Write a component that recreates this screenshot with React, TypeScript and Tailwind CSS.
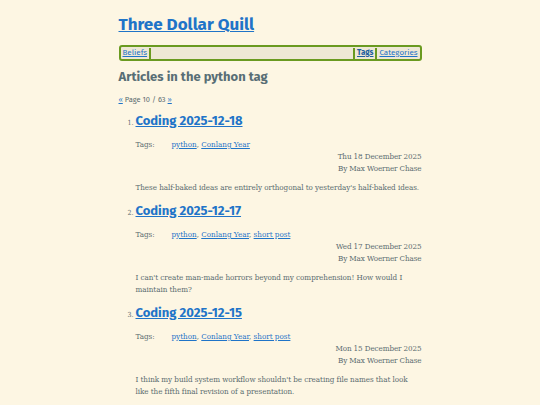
import React from 'react';

type Post = {
  title: string;
  tags: string[];
  date: string;
  summary: string;
};

const posts: Post[] = [
  {
    title: 'Coding 2025-12-18',
    tags: ['python', 'Conlang Year'],
    date: 'Thu 18 December 2025',
    summary: "These half-baked ideas are entirely orthogonal to yesterday's half-baked ideas.",
  },
  {
    title: 'Coding 2025-12-17',
    tags: ['python', 'Conlang Year', 'short post'],
    date: 'Wed 17 December 2025',
    summary: "I can't create man-made horrors beyond my comprehension! How would I maintain them?",
  },
  {
    title: 'Coding 2025-12-15',
    tags: ['python', 'Conlang Year', 'short post'],
    date: 'Mon 15 December 2025',
    summary:
      "I think my build system workflow shouldn't be creating file names that look like the fifth final revision of a presentation.",
  },
];

const link = 'text-[#1f74c8] underline';
const sans = "font-['Fira_Sans','Lato',sans-serif]";

function Sep() {
  return <span className="mx-[2px] inline-block h-[11px] w-[2px] bg-[#6a9a20]" />;
}

function PostItem({ post, n }: { post: Post; n: number }) {
  return (
    <li className="flex">
      <span className="w-[17px] pt-[6px] pr-[2px] text-right text-[7px] leading-[10px]">{n}.</span>
      <div className="flex-1">
        <h3 className={`${sans} text-[13px] font-bold leading-[18px] ${link}`}>{post.title}</h3>
        <div className="mt-[9px] flex text-[8px] leading-[12px]">
          <span className="w-[36px]">Tags:</span>
          <span>
            {post.tags.map((t, i) => (
              <span key={t}>
                <a className={link}>{t}</a>
                {i < post.tags.length - 1 && ', '}
              </span>
            ))}
          </span>
        </div>
        <div className="text-right text-[8px] leading-[12px] tracking-[-0.1px]">
          <div>{post.date}</div>
          <div>By Max Woerner Chase</div>
        </div>
        <p className="mt-[7px] mb-[8px] text-[8px] leading-[12px] tracking-[-0.05px]">{post.summary}</p>
      </div>
    </li>
  );
}

export default function App() {
  return (
    <div className="min-h-[405px] bg-[#fdf6e3] font-['DejaVu_Serif_Condensed','Liberation_Serif',serif] text-[#5b6c70]">
      <div className="mx-auto w-[303px] pt-[14px]">
        <h1 className={`${sans} text-[17px] font-bold leading-[22px] ${link}`}>Three Dollar Quill</h1>
        <nav
          className={`${sans} mt-[9px] flex h-[16px] items-center rounded-[3px] border-2 border-[#6a9a20] bg-[#eee8d5] px-[2px] text-[8px]`}
        >
          <a className={link}>Beliefs</a>
          <Sep />
          <span className="flex-1" />
          <Sep />
          <a className="font-bold text-[#1f5f9f] underline">Tags</a>
          <Sep />
          <a className={link}>Categories</a>
        </nav>
        <h2 className={`${sans} mt-[7px] text-[13px] font-bold leading-[18px] text-[#586e75]`}>
          Articles in the python tag
        </h2>
        <div className={`${sans} mt-[9px] text-[7.5px] leading-[10px]`}>
          <a className={link}>«</a> Page 10 / 63 <a className={link}>»</a>
        </div>
        <ol className="mt-[7px]">
          {posts.map((p, i) => (
            <PostItem key={p.title} post={p} n={i + 1} />
          ))}
        </ol>
      </div>
    </div>
  );
}
